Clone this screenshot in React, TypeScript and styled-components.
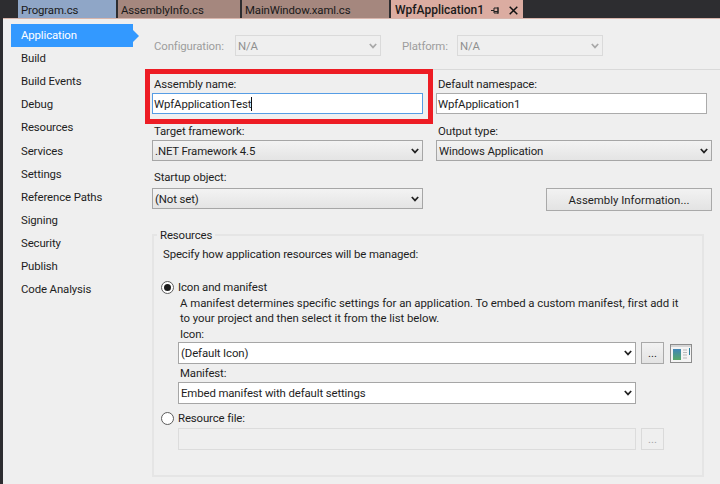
import React from 'react';
import styled, { createGlobalStyle } from 'styled-components';

const GlobalStyle = createGlobalStyle`
  html, body {
    margin: 0;
    padding: 0;
    background: #2d2d30;
  }
  * {
    box-sizing: border-box;
  }
`;

const Page = styled.div`
  display: flex;
  flex-direction: column;
  width: 720px;
  height: 484px;
  overflow: hidden;
  background: #2d2d30;
  font-family: Roboto, "Liberation Sans", sans-serif;
  font-size: 11.4px;
  letter-spacing: -0.12px;
  color: #1e1e1e;
`;

const TabBar = styled.div`
  display: flex;
  flex: 0 0 18px;
  gap: 2px;
  padding-left: 18px;
`;

const Tab = styled.div<{ $width: number; $bg: string; $bold?: boolean }>`
  display: flex;
  align-items: center;
  gap: 7px;
  width: ${props => props.$width}px;
  padding: 2px 0 0 ${props => (props.$bold ? 4 : 3)}px;
  background: ${props => props.$bg};
  font-size: ${props => (props.$bold ? 12 : 11.4)}px;
  font-weight: ${props => (props.$bold ? 500 : 400)};
  letter-spacing: ${props => (props.$bold ? 0 : -0.12)}px;
  color: #1a1a1a;
`;

const TabIcons = styled.span`
  display: flex;
  align-items: center;
  gap: 9px;
`;

const Body = styled.div`
  flex: 1;
  display: flex;
  margin-left: 3px;
  background: #efefef;
  border-top: 1px solid #d8b5ac;
`;

const Sidebar = styled.nav`
  flex: 0 0 149px;
  display: flex;
  flex-direction: column;
  padding: 5px 0 0 8px;
`;

const NavItem = styled.div<{ $active?: boolean }>`
  position: relative;
  display: flex;
  align-items: center;
  width: 122px;
  height: 23.1px;
  padding: 0 0 1px 10px;
  background: ${props => (props.$active ? '#3399ff' : 'transparent')};
  color: ${props => (props.$active ? '#ffffff' : '#1e1e1e')};

  ${props =>
    props.$active &&
    `
    &::after {
      content: '';
      position: absolute;
      left: 100%;
      top: 6px;
      border-left: 6px solid #3399ff;
      border-top: 6px solid transparent;
      border-bottom: 6px solid transparent;
    }
  `}
`;

const Main = styled.main`
  position: relative;
  flex: 1;
  padding-top: 16px;
`;

const ConfigRow = styled.div`
  display: flex;
  align-items: center;
  height: 21px;
  color: #9d9d9d;
`;

const ConfigLabel = styled.span<{ $width: number; $inset?: number }>`
  width: ${props => props.$width}px;
  padding-left: ${props => props.$inset ?? 2}px;
`;

const FormGrid = styled.div`
  display: grid;
  grid-template-columns: 271px 276px;
  column-gap: 13px;
  margin-top: 21px;
`;

const Field = styled.div`
  display: flex;
  flex-direction: column;
`;

const FieldLabel = styled.label<{ $top?: number; $height?: number }>`
  height: ${props => props.$height ?? 16}px;
  margin-top: ${props => props.$top ?? 0}px;
  padding-left: 2px;
  line-height: 15px;
`;

const TextBox = styled.div<{ $focused?: boolean; $width?: number; $disabled?: boolean }>`
  display: flex;
  align-items: center;
  width: ${props => (props.$width ? `${props.$width}px` : '100%')};
  height: ${props => (props.$disabled ? 22 : 21)}px;
  padding-left: 1px;
  background: ${props => (props.$disabled ? '#efefef' : '#ffffff')};
  border: 1px solid
    ${props => (props.$focused ? '#569de5' : props.$disabled ? '#dcdcdc' : '#ababab')};
  white-space: nowrap;
`;

const Caret = styled.span`
  width: 1px;
  height: 14px;
  background: #111111;
`;

const Combo = styled.div<{ $variant?: 'button' | 'edit' | 'disabled'; $width?: number }>`
  display: flex;
  align-items: center;
  justify-content: space-between;
  width: ${props => (props.$width ? `${props.$width}px` : '100%')};
  height: ${props => (props.$variant === 'edit' ? 22 : 21)}px;
  padding: 0 3px 0 2px;
  border: 1px solid ${props => (props.$variant === 'disabled' ? '#dadada' : '#a6a6a6')};
  background: ${props =>
    props.$variant === 'edit'
      ? '#ffffff'
      : props.$variant === 'disabled'
        ? '#efefef'
        : 'linear-gradient(#f3f3f3, #e4e4e4)'};
  color: ${props => (props.$variant === 'disabled' ? '#8f8f8f' : '#1e1e1e')};
  white-space: nowrap;
`;

const Highlight = styled.div`
  position: absolute;
  left: -7px;
  top: 50px;
  width: 288px;
  height: 55px;
  border: 5px solid #ed1c24;
  pointer-events: none;

  &::after {
    content: '';
    position: absolute;
    left: 100%;
    top: -5px;
    margin-left: 5px;
    width: 290px;
    height: 1px;
    background: #d9d9d9;
  }
`;

const RightAction = styled.div`
  display: flex;
  justify-content: flex-end;
  padding-top: 27px;
`;

const Button = styled.button<{ $width: number; $height: number; $disabled?: boolean }>`
  width: ${props => props.$width}px;
  height: ${props => props.$height}px;
  padding: 0;
  border: 1px solid ${props => (props.$disabled ? '#dadada' : '#a9a9a9')};
  background: ${props => (props.$disabled ? '#efefef' : 'linear-gradient(#f2f2f2, #e3e3e3)')};
  color: ${props => (props.$disabled ? '#a5a5a5' : '#1e1e1e')};
  font: inherit;
`;

const Group = styled.fieldset`
  display: flex;
  flex-direction: column;
  width: 552px;
  height: 250px;
  margin: 16px 0 0;
  padding: 3px 0 0 7px;
  border: 2px solid #e5e5e5;
`;

const Legend = styled.legend`
  height: 16px;
  margin-left: -4px;
  padding: 0 3px;
  line-height: 17px;
`;

const GroupText = styled.div`
  height: 16px;
  padding-left: 2px;
  line-height: 17px;
`;

const RadioRow = styled.div<{ $top: number }>`
  display: flex;
  align-items: center;
  gap: 4px;
  height: 16px;
  margin-top: ${props => props.$top}px;
`;

const Radio = styled.span<{ $checked?: boolean }>`
  display: flex;
  align-items: center;
  justify-content: center;
  width: 13px;
  height: 13px;
  border: 1px solid #5c5c5c;
  border-radius: 50%;
  background: #ffffff;

  &::after {
    content: '';
    width: 7px;
    height: 7px;
    border-radius: 50%;
    background: ${props => (props.$checked ? '#1c1c1c' : 'transparent')};
  }
`;

const Indented = styled.div`
  display: flex;
  flex-direction: column;
  padding-left: 17px;
`;

const Description = styled.div`
  margin-top: 1px;
  padding-left: 2px;
  letter-spacing: -0.04px;
  line-height: 15px;
  white-space: nowrap;
`;

const ActionRow = styled.div<{ $top?: number }>`
  display: flex;
  align-items: center;
  gap: 5px;
  margin-top: ${props => props.$top ?? 0}px;
`;

const PreviewSvg = styled.svg`
  margin-left: 1px;
`;

const Chevron = ({ color = '#222222' }: { color?: string }) => (
  <svg width="8" height="6" viewBox="0 0 8 6" aria-hidden="true">
    <path d="M.8 1 4 4.400 7.200 1" fill="none" stroke={color} strokeWidth="1.7" />
  </svg>
);

const PinIcon = () => (
  <svg width="9" height="9" viewBox="0 0 9 9" aria-hidden="true">
    <path d="M0 4.5h3M3 2h4v5H3zM3 5.500h4M7 1v7" fill="none" stroke="#222" strokeWidth="1" />
  </svg>
);

const CloseIcon = () => (
  <svg width="9" height="9" viewBox="0 0 9 9" aria-hidden="true">
    <path d="M.7.7l7.6 7.6M8.300.7.7 8.300" fill="none" stroke="#111" strokeWidth="1.5" />
  </svg>
);

const PreviewIcon = () => (
  <PreviewSvg width="22" height="19" viewBox="0 0 22 19" aria-hidden="true">
    <defs>
      <linearGradient id="preview" x1="0" y1="0" x2="0" y2="1">
        <stop offset="0" stopColor="#3f86b8" />
        <stop offset="1" stopColor="#58a866" />
      </linearGradient>
    </defs>
    <rect x=".5" y=".5" width="21" height="18" fill="#f4f4f4" stroke="#8c8c8c" />
    <rect x="1" y="1" width="20" height="2" fill="#d5d5d5" />
    <rect x="3" y="5" width="8" height="11" fill="url(#preview)" />
    <path d="M13 6h4M13 8.500h4M13 11h4M13 14h4" stroke="#b9b9b9" />
    <rect x="19" y="4" width="1" height="7" fill="#2e7f9d" />
  </PreviewSvg>
);

const navItems = [
  'Application',
  'Build',
  'Build Events',
  'Debug',
  'Resources',
  'Services',
  'Settings',
  'Reference Paths',
  'Signing',
  'Security',
  'Publish',
  'Code Analysis',
];

const App: React.FC = () => {
  return (
    <Page>
      <GlobalStyle />
      <TabBar>
        <Tab $width={98} $bg="#8fa6c7">Program.cs</Tab>
        <Tab $width={122} $bg="#a5877e">AssemblyInfo.cs</Tab>
        <Tab $width={147} $bg="#a5877e">MainWindow.xaml.cs</Tab>
        <Tab $width={132} $bg="#dbaca1" $bold>
          WpfApplication1
          <TabIcons>
            <PinIcon />
            <CloseIcon />
          </TabIcons>
        </Tab>
      </TabBar>
      <Body>
        <Sidebar>
          {navItems.map((item, index) => (
            <NavItem key={item} $active={index === 0}>{item}</NavItem>
          ))}
        </Sidebar>
        <Main>
          <ConfigRow>
            <ConfigLabel $width={83}>Configuration:</ConfigLabel>
            <Combo $variant="disabled" $width={146}>N/A<Chevron color="#a8a8a8" /></Combo>
            <ConfigLabel $width={76} $inset={21}>Platform:</ConfigLabel>
            <Combo $variant="disabled" $width={146}>N/A<Chevron color="#a8a8a8" /></Combo>
          </ConfigRow>
          <FormGrid>
            <Field>
              <FieldLabel>Assembly name:</FieldLabel>
              <TextBox $focused>WpfApplicationTest<Caret /></TextBox>
            </Field>
            <Field>
              <FieldLabel>Default namespace:</FieldLabel>
              <TextBox $width={271}>WpfApplication1</TextBox>
            </Field>
            <Field>
              <FieldLabel $top={10}>Target framework:</FieldLabel>
              <Combo>.NET Framework 4.5<Chevron /></Combo>
            </Field>
            <Field>
              <FieldLabel $top={10}>Output type:</FieldLabel>
              <Combo>Windows Application<Chevron /></Combo>
            </Field>
            <Field>
              <FieldLabel $top={9} $height={18}>Startup object:</FieldLabel>
              <Combo>(Not set)<Chevron /></Combo>
            </Field>
            <RightAction>
              <Button $width={166} $height={23}>Assembly Information...</Button>
            </RightAction>
          </FormGrid>
          <Highlight />
          <Group>
            <Legend>Resources</Legend>
            <GroupText>Specify how application resources will be managed:</GroupText>
            <RadioRow $top={17}>
              <Radio $checked />
              Icon and manifest
            </RadioRow>
            <Indented>
              <Description>
                A manifest determines specific settings for an application. To embed a custom manifest, first add it
                <br />
                to your project and then select it from the list below.
              </Description>
              <FieldLabel $top={1} $height={15}>Icon:</FieldLabel>
              <ActionRow>
                <Combo $variant="edit" $width={458}>(Default Icon)<Chevron /></Combo>
                <Button $width={23} $height={22}>...</Button>
                <PreviewIcon />
              </ActionRow>
              <FieldLabel $top={2}>Manifest:</FieldLabel>
              <Combo $variant="edit" $width={458}>Embed manifest with default settings<Chevron /></Combo>
            </Indented>
            <RadioRow $top={6}>
              <Radio />
              Resource file:
            </RadioRow>
            <Indented>
              <ActionRow $top={2}>
                <TextBox $disabled $width={458} />
                <Button $width={23} $height={22} $disabled>...</Button>
              </ActionRow>
            </Indented>
          </Group>
        </Main>
      </Body>
    </Page>
  );
};

export default App;
